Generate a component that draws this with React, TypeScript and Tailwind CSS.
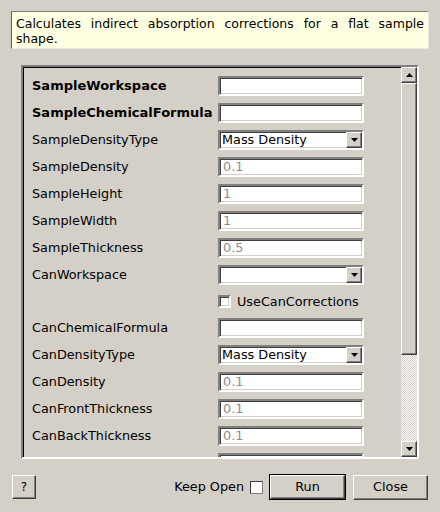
import React from "react";

const sunken =
  "border-2 border-t-[#808080] border-l-[#808080] border-b-white border-r-white shadow-[inset_1px_1px_0_#404040,inset_-1px_-1px_0_#d4d0c8]";
const raised =
  "border border-t-white border-l-white border-b-[#404040] border-r-[#404040] shadow-[inset_-1px_-1px_0_#808080]";

function DownArrow() {
  return (
    <svg width="7" height="4" viewBox="0 0 7 4">
      <path d="M0 0 H7 L3.5 4 Z" fill="#000" />
    </svg>
  );
}
function UpArrow() {
  return (
    <svg width="7" height="4" viewBox="0 0 7 4">
      <path d="M0 4 H7 L3.5 0 Z" fill="#000" />
    </svg>
  );
}

function TextField({ value }: { value?: string }) {
  return (
    <div className={`w-[146px] h-[20px] bg-white flex items-center pl-[3px] text-[#8c8c8c] ${sunken}`}>
      {value}
    </div>
  );
}

function Combo({ value }: { value?: string }) {
  return (
    <div className={`w-[146px] h-[20px] bg-white flex items-stretch ${sunken}`}>
      <div className="flex-1 flex items-center pl-[2px] text-black">{value}</div>
      <div className={`w-[16px] bg-[#d4d0c8] flex items-center justify-center ${raised}`}>
        <DownArrow />
      </div>
    </div>
  );
}

type Row =
  | { kind: "text"; label: string; bold?: boolean; value?: string }
  | { kind: "combo"; label: string; value?: string }
  | { kind: "check"; label: string };

const rows: Row[] = [
  { kind: "text", label: "SampleWorkspace", bold: true },
  { kind: "text", label: "SampleChemicalFormula", bold: true },
  { kind: "combo", label: "SampleDensityType", value: "Mass Density" },
  { kind: "text", label: "SampleDensity", value: "0.1" },
  { kind: "text", label: "SampleHeight", value: "1" },
  { kind: "text", label: "SampleWidth", value: "1" },
  { kind: "text", label: "SampleThickness", value: "0.5" },
  { kind: "combo", label: "CanWorkspace" },
  { kind: "check", label: "UseCanCorrections" },
  { kind: "text", label: "CanChemicalFormula" },
  { kind: "combo", label: "CanDensityType", value: "Mass Density" },
  { kind: "text", label: "CanDensity", value: "0.1" },
  { kind: "text", label: "CanFrontThickness", value: "0.1" },
  { kind: "text", label: "CanBackThickness", value: "0.1" },
  { kind: "text", label: "CanScaleFactor", value: "1" },
  { kind: "text", label: "Events" },
];

function Checkbox() {
  return <div className={`w-[13px] h-[13px] bg-white ${sunken}`} />;
}

export default function App() {
  return (
    <div className="w-[440px] h-[512px] bg-[#d4d0c8] flex flex-col font-['DejaVu_Sans',sans-serif] text-[12.8px] text-black overflow-hidden">
      <div className="mt-[11px] ml-[11px] w-[418px] h-[38px] bg-[#ffffe1] border border-t-[#808080] border-l-[#606060] border-b-[#e8e8e8] border-r-[#e8e8e8] px-[4px] pt-[4px] leading-[15px] text-[12.5px] text-justify">
        Calculates indirect absorption corrections for a flat sample shape.
      </div>

      <div className="mt-[16px] ml-[21px] w-[398px] h-[394px] flex border-2 border-t-[#808080] border-l-[#808080] border-b-white border-r-white shadow-[inset_1px_1px_0_#000]">
        <div className="flex-1 overflow-hidden">
          <div className="flex flex-col gap-[7px] pt-[9px] pl-[9px]">
            {rows.map((r, i) =>
              r.kind === "check" ? (
                <div key={i} className="h-[19px] flex items-center">
                  <div className="w-[186px]" />
                  <Checkbox />
                  <span className="ml-[6px]">{r.label}</span>
                </div>
              ) : (
                <div key={i} className="h-[20px] flex items-center">
                  <div
                    className={`w-[186px] whitespace-nowrap ${
                      r.kind === "text" && r.bold ? "font-bold text-[13px]" : ""
                    }`}
                  >
                    {r.label}
                  </div>
                  {r.kind === "combo" ? <Combo value={r.value} /> : <TextField value={r.value} />}
                </div>
              )
            )}
          </div>
        </div>
        <div className="w-[16px] flex flex-col">
          <div className={`h-[16px] bg-[#d4d0c8] flex items-center justify-center ${raised}`}>
            <UpArrow />
          </div>
          <div className={`h-[272px] bg-[#d4d0c8] ${raised}`} />
          <div className="flex-1 bg-[image:repeating-conic-gradient(#ffffff_0_25%,#d4d0c8_0_50%)] bg-[length:2px_2px]" />
          <div className={`h-[16px] bg-[#d4d0c8] flex items-center justify-center ${raised}`}>
            <DownArrow />
          </div>
        </div>
      </div>

      <div className="mt-[15px] h-[26px] flex items-center pl-[12px] pr-[12px]">
        <div className={`w-[24px] h-[24px] flex items-center justify-center text-[12px] ${raised}`}>?</div>
        <div className="flex-1" />
        <span>Keep Open</span>
        <div className="ml-[6px] w-[13px] h-[13px] bg-white border border-t-[#404040] border-l-[#404040] border-b-[#808080] border-r-[#808080]" />
        <div className="ml-[6px] w-[77px] h-[26px] border border-black flex">
          <div className={`flex-1 flex items-center justify-center ${raised}`}>Run</div>
        </div>
        <div className={`ml-[7px] w-[75px] h-[25px] flex items-center justify-center ${raised}`}>Close</div>
      </div>
    </div>
  );
}
